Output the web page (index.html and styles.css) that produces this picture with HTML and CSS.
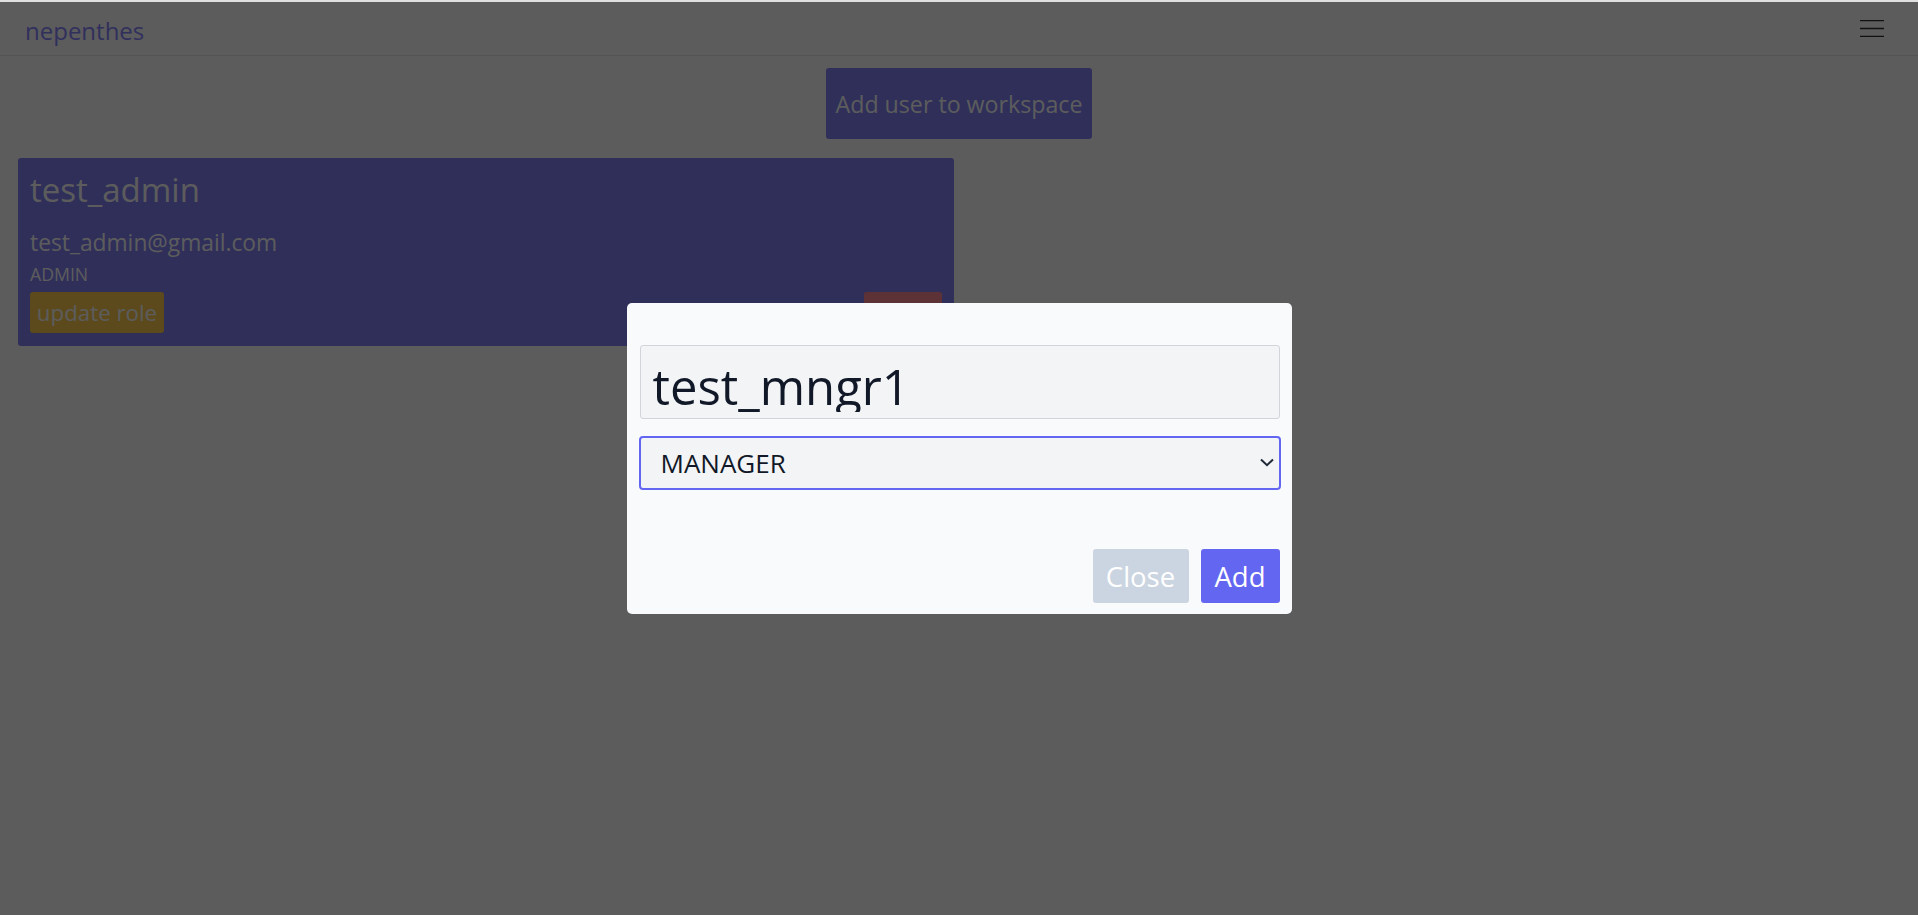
FILE: index.html
```html
<!DOCTYPE html>
<html lang="en">
<head>
<meta charset="utf-8">
<title>nepenthes</title>
<link rel="stylesheet" href="styles.css">
</head>
<body>
<div class="top-strip"></div>
<nav class="navbar">
  <a class="brand" href="#">nepenthes</a>
  <button class="menu-toggle" aria-label="menu">
    <svg width="24" height="17" viewBox="0 0 24 17"><path d="M0 0.5H24M0 8.5H24M0 16.5H24" stroke="#2f2f2f" stroke-width="1.3" fill="none"/></svg>
  </button>
</nav>
<main class="content">
  <div class="actions">
    <button class="btn-add-user">Add user to workspace</button>
  </div>
  <div class="user-grid">
    <div class="user-card">
      <h2 class="user-name">test_admin</h2>
      <p class="user-email">test_admin@gmail.com</p>
      <p class="user-role">ADMIN</p>
      <div class="card-buttons">
        <button class="btn-update">update role</button>
        <button class="btn-delete">delete</button>
      </div>
    </div>
  </div>
</main>
<div class="overlay">
  <div class="modal">
    <div class="modal-body">
      <div class="input-wrap">
        <input class="name-input" type="text" value="test_mngr1">
      </div>
      <div class="select-wrap">
        <select class="role-select">
          <option>MANAGER</option>
          <option>ADMIN</option>
          <option>USER</option>
        </select>
        <svg class="chevron" width="14" height="9" viewBox="0 0 14 9"><path d="M1 1.5L7 7.2L13 1.5" stroke="#1f2937" stroke-width="2" fill="none"/></svg>
      </div>
    </div>
    <div class="modal-footer">
      <button class="btn-close">Close</button>
      <button class="btn-confirm">Add</button>
    </div>
  </div>
</div>
</body>
</html>
```
FILE: styles.css
```css
* { box-sizing: border-box; }
html, body { margin: 0; padding: 0; }
body {
  font-family: "Open Sans", "Noto Sans", sans-serif;
  background: #ffffff;
  height: 915px;
  overflow: hidden;
}
.top-strip { height: 2px; background: #e0e0e0; }
.navbar {
  height: 54px;
  border-bottom: 1px solid #e5e7eb;
  display: flex;
  align-items: center;
  justify-content: space-between;
  padding: 0 34px 0 25px;
}
.brand {
  font-size: 24px;
  color: #8884ff;
  text-decoration: none;
  margin-top: 4px;
}
.menu-toggle {
  border: 0;
  background: none;
  padding: 0;
  display: flex;
}
.content { padding-top: 12px; }
.actions { display: flex; justify-content: center; }
.btn-add-user {
  height: 71px;
  width: 266px;
  padding: 0;
  white-space: nowrap;
  border: 0;
  border-radius: 3px;
  background: #8282fa;
  color: #ffffff;
  font-family: inherit;
  font-size: 23.2px;
}
.user-grid {
  display: grid;
  grid-template-columns: 1fr 1fr;
  gap: 10px;
  padding: 19px 18px 0;
}
.user-card {
  background: #8282fa;
  border-radius: 3px;
  padding: 12px 12px 13px;
  color: #ffffff;
}
.user-name {
  margin: 0;
  font-weight: 400;
  font-size: 33px;
  line-height: 1.2;
}
.user-email {
  margin: 16px 0 0;
  font-size: 22.8px;
  line-height: 1.5;
}
.user-role {
  margin: 1px 0 0;
  font-size: 17.7px;
  line-height: 1.5;
}
.card-buttons {
  margin-top: 5px;
  display: flex;
  justify-content: space-between;
}
.btn-update, .btn-delete {
  height: 41px;
  border: 0;
  border-radius: 3px;
  color: #ffffff;
  font-family: inherit;
  font-size: 22.3px;
  padding: 0;
  white-space: nowrap;
}
.btn-update { background: #ffcd4e; width: 134px; }
.btn-delete { background: #ff8b96; width: 78px; }

.overlay {
  position: fixed;
  top: 2px; left: 0; right: 0; bottom: 0;
  background: rgba(0, 0, 0, 0.64);
  display: flex;
  align-items: center;
  justify-content: center;
}
.modal {
  width: 665px;
  background: #f9fafb;
  border-radius: 5px;
  padding: 42px 12px 11px 13px;
}
.modal-body {
  display: flex;
  flex-direction: column;
  gap: 17px;
}
.input-wrap {
  width: 640px;
  height: 74px;
  border: 1px solid #d1d5db;
  border-radius: 3px;
  background: #f3f4f6;
  padding: 0 0 6px 0;
}
.name-input {
  display: block;
  width: 100%;
  height: 100%;
  border: 0;
  background: transparent;
  color: #111827;
  font-family: inherit;
  font-size: 49px;
  line-height: 52px;
  padding: 13px 12px 0 12px;
  outline: none;
  clip-path: inset(0);
}
.select-wrap {
  position: relative;
  width: 642px;
  margin-left: -1px;
}
.role-select {
  display: block;
  width: 100%;
  height: 54px;
  appearance: none;
  -webkit-appearance: none;
  border: 2px solid #6366f1;
  border-radius: 4px;
  background: #f3f4f6;
  color: #111827;
  font-family: inherit;
  font-size: 26px;
  padding: 0 40px 0 20px;
  outline: none;
}
.chevron {
  position: absolute;
  right: 7px;
  top: 22px;
  pointer-events: none;
}
.modal-footer {
  margin-top: 59px;
  display: flex;
  justify-content: flex-end;
  gap: 12px;
}
.btn-close, .btn-confirm {
  height: 54px;
  border: 0;
  border-radius: 3px;
  color: #ffffff;
  font-family: inherit;
  font-size: 27.5px;
  padding: 0;
}
.btn-close { background: #cbd5e1; width: 96px; }
.btn-confirm { background: #6366f1; width: 79px; }
```
